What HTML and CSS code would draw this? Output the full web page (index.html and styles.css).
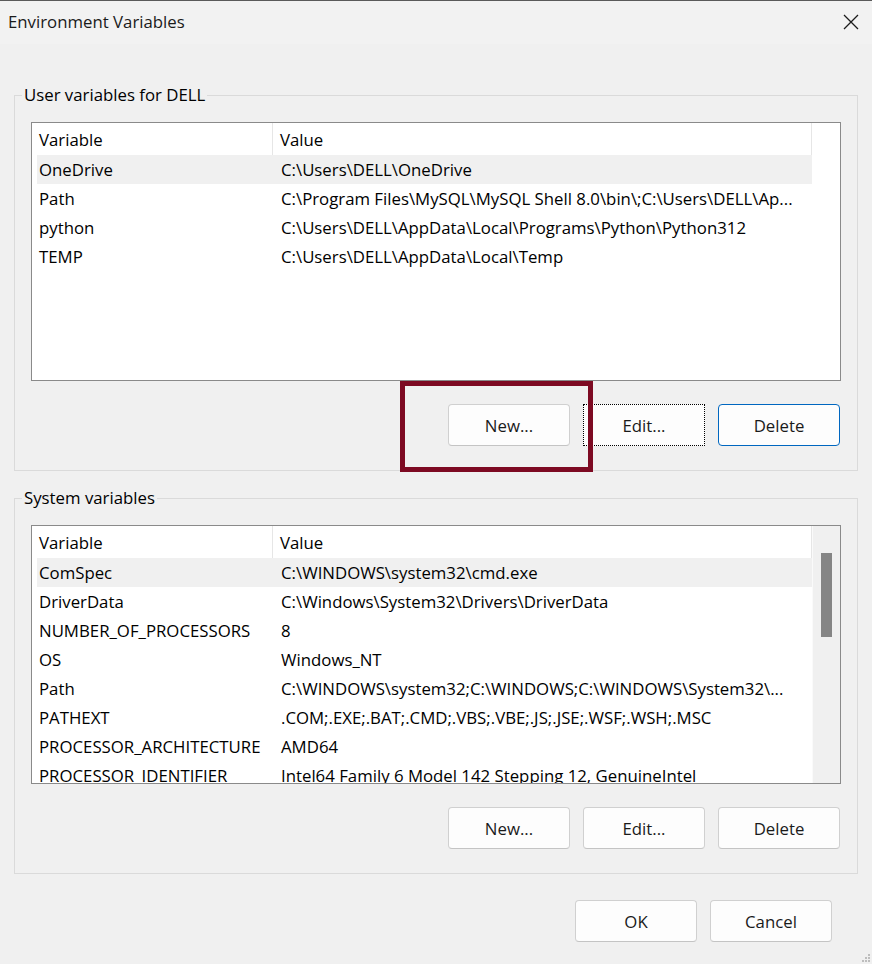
FILE: index.html
```html
<!DOCTYPE html>
<html>
<head>
<meta charset="utf-8">
<title>Environment Variables</title>
<link rel="stylesheet" href="styles.css">
</head>
<body>
<div class="window">
  <div class="titlebar">
    <span class="title">Environment Variables</span>
    <span class="close">
      <svg width="16" height="16" viewBox="0 0 16 16"><path d="M1 1 L15 15 M15 1 L1 15" stroke="#1b1b1b" stroke-width="1.3" fill="none"/></svg>
    </span>
  </div>
  <div class="content">
    <fieldset class="group">
      <legend>User variables for DELL</legend>
      <div class="list">
        <div class="head">
          <div class="hc c1">Variable</div>
          <div class="hc c2">Value</div>
        </div>
        <div class="row sel"><div class="rc c1">OneDrive</div><div class="rc c2">C:\Users\DELL\OneDrive</div></div>
        <div class="row"><div class="rc c1">Path</div><div class="rc c2">C:\Program Files\MySQL\MySQL Shell 8.0\bin\;C:\Users\DELL\Ap...</div></div>
        <div class="row"><div class="rc c1">python</div><div class="rc c2">C:\Users\DELL\AppData\Local\Programs\Python\Python312</div></div>
        <div class="row"><div class="rc c1">TEMP</div><div class="rc c2">C:\Users\DELL\AppData\Local\Temp</div></div>
      </div>
      <div class="btnrow">
        <span class="annot"></span>
        <button class="btn">New...</button>
        <button class="btn focus">Edit...</button>
        <button class="btn default">Delete</button>
      </div>
    </fieldset>

    <fieldset class="group sys">
      <legend>System variables</legend>
      <div class="list scroll">
        <div class="scrollbar"><div class="thumb"></div></div>
        <div class="head">
          <div class="hc c1">Variable</div>
          <div class="hc c2">Value</div>
        </div>
        <div class="row sel"><div class="rc c1">ComSpec</div><div class="rc c2">C:\WINDOWS\system32\cmd.exe</div></div>
        <div class="row"><div class="rc c1">DriverData</div><div class="rc c2">C:\Windows\System32\Drivers\DriverData</div></div>
        <div class="row"><div class="rc c1">NUMBER_OF_PROCESSORS</div><div class="rc c2">8</div></div>
        <div class="row"><div class="rc c1">OS</div><div class="rc c2">Windows_NT</div></div>
        <div class="row"><div class="rc c1">Path</div><div class="rc c2">C:\WINDOWS\system32;C:\WINDOWS;C:\WINDOWS\System32\...</div></div>
        <div class="row"><div class="rc c1">PATHEXT</div><div class="rc c2">.COM;.EXE;.BAT;.CMD;.VBS;.VBE;.JS;.JSE;.WSF;.WSH;.MSC</div></div>
        <div class="row"><div class="rc c1">PROCESSOR_ARCHITECTURE</div><div class="rc c2">AMD64</div></div>
        <div class="row"><div class="rc c1">PROCESSOR_IDENTIFIER</div><div class="rc c2">Intel64 Family 6 Model 142 Stepping 12, GenuineIntel</div></div>
      </div>
      <div class="btnrow">
        <button class="btn">New...</button>
        <button class="btn">Edit...</button>
        <button class="btn">Delete</button>
      </div>
    </fieldset>

    <div class="footer">
      <button class="btn">OK</button>
      <button class="btn">Cancel</button>
    </div>
  </div>
  <svg class="grip" width="10" height="10" viewBox="0 0 10 10">
    <rect x="7" y="1" width="2" height="2" fill="#bdbdbd"/>
    <rect x="4" y="4" width="2" height="2" fill="#bdbdbd"/>
    <rect x="7" y="4" width="2" height="2" fill="#bdbdbd"/>
    <rect x="1" y="7" width="2" height="2" fill="#bdbdbd"/>
    <rect x="4" y="7" width="2" height="2" fill="#bdbdbd"/>
    <rect x="7" y="7" width="2" height="2" fill="#bdbdbd"/>
  </svg>
</div>
</body>
</html>
```

FILE: styles.css
```css
* { box-sizing: border-box; }
html, body {
  margin: 0;
  padding: 0;
  background: #f0f0f0;
}
body {
  font-family: "Open Sans", "Noto Sans", sans-serif;
  font-size: 16.8px;
  color: #000;
}
.window {
  position: relative;
  width: 872px;
  height: 964px;
  overflow: hidden;
  background: #f0f0f0;
  border-top: 1px solid #5a5a5a;
}
.titlebar {
  height: 43px;
  display: flex;
  align-items: center;
  justify-content: space-between;
  padding: 0 13px 2px 8px;
  background: #f2f2f2;
}
.title {
  color: #1a1a1a;
  line-height: 22px;
}
.close {
  display: flex;
  width: 16px;
  height: 16px;
}
.content {
  padding-top: 40px;
}
.group {
  margin: 0 14px;
  border: 1px solid #dadada;
  padding: 0 16px 24px 7px;
  min-width: 0;
}
.group legend {
  padding: 0 2px;
  line-height: 22px;
  color: #000;
}
.group.sys {
  margin-top: 16px;
}
.list {
  position: relative;
  margin: 16px 0 0 9px;
  height: 259px;
  border: 1px solid #8a8a8a;
  background: #fff;
  overflow: hidden;
}
.head {
  display: flex;
  height: 32px;
  width: 780px;
  border-right: 1px solid #e6e6e6;
}
.hc {
  line-height: 33px;
  white-space: nowrap;
}
.hc.c1 {
  width: 241px;
  padding-left: 7px;
  border-right: 1px solid #e6e6e6;
}
.hc.c2 {
  flex: 1;
  padding-left: 7px;
}
.row {
  display: flex;
  height: 29px;
  margin-left: 5px;
  width: 775px;
}
.row.sel {
  background: #f0f0f0;
}
.rc {
  line-height: 30px;
  white-space: nowrap;
  overflow: hidden;
}
.rc.c1 {
  width: 236px;
  padding-left: 2px;
}
.rc.c2 {
  flex: 1;
  padding-left: 8px;
}
.scrollbar {
  position: absolute;
  right: 0;
  top: 0;
  bottom: 0;
  width: 28px;
  background: #f0f0f0;
  border-left: 1px solid #fafafa;
}
.thumb {
  margin: 27px 0 0 8px;
  width: 11px;
  height: 84px;
  background: #858585;
}
.btnrow {
  position: relative;
  display: flex;
  justify-content: flex-end;
  gap: 13px;
  margin: 23px 1px 0 9px;
}
.btn {
  width: 122px;
  height: 42px;
  border: 1px solid #d0d0d0;
  border-bottom-color: #c4c4c4;
  border-radius: 4px;
  background: #fdfdfd;
  font-family: inherit;
  font-size: 16.8px;
  color: #1a1a1a;
  padding: 0;
}
.btn.focus {
  border: 1px dotted #000;
  border-radius: 0;
}
.btn.default {
  border: 1px solid #0067c0;
}
.annot {
  position: absolute;
  left: 369px;
  top: -23px;
  width: 193px;
  height: 91px;
  border: 5px solid #7d0a22;
  pointer-events: none;
}
.footer {
  display: flex;
  justify-content: flex-end;
  gap: 13px;
  margin: 26px 40px 0 0;
}
.grip {
  position: absolute;
  right: 1px;
  bottom: 1px;
}
```
